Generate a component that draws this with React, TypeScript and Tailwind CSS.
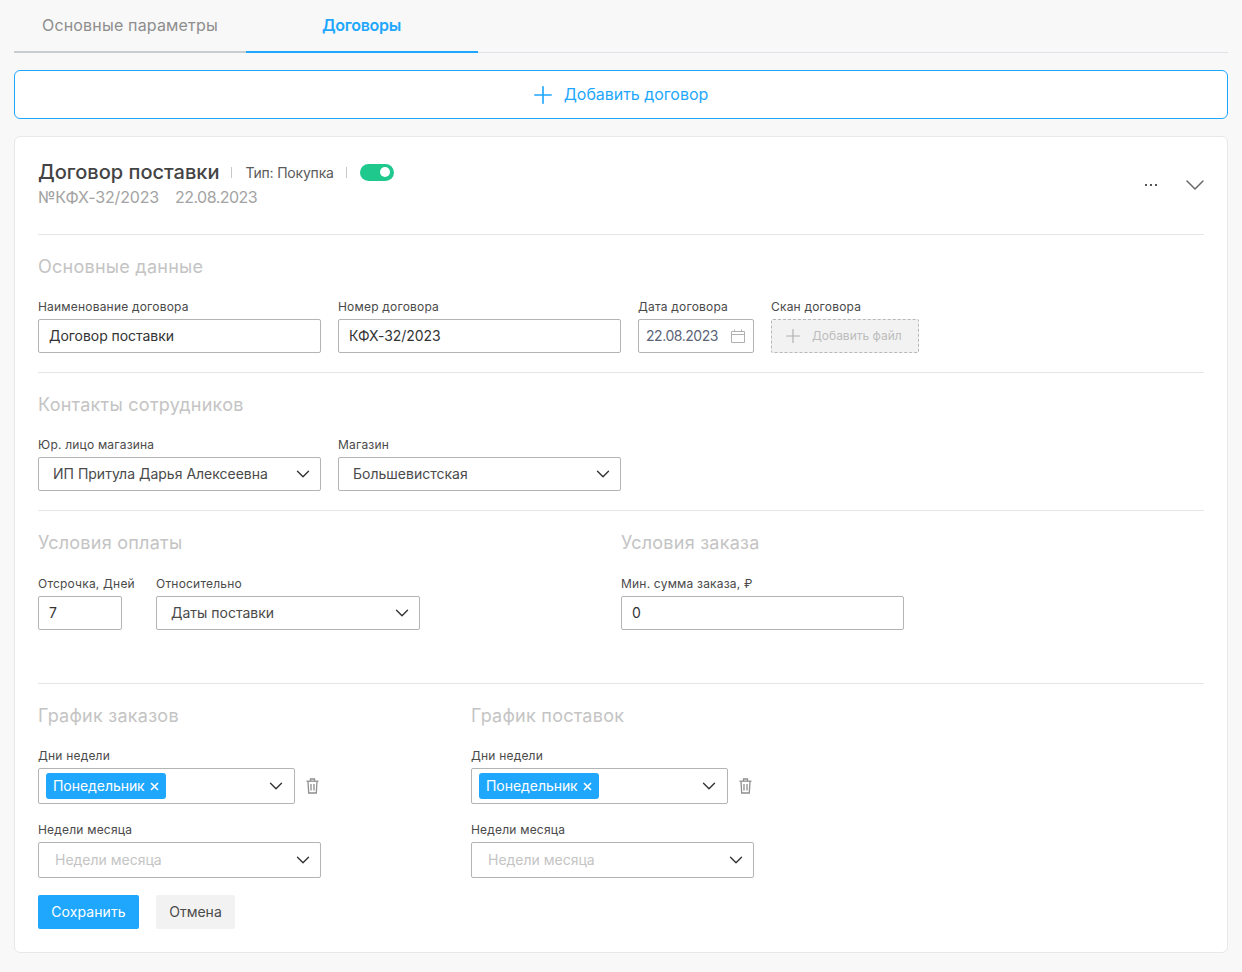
import React from "react";
import { Plus, ChevronDown } from "lucide-react";

const font = { fontFamily: "Inter, 'Noto Sans', sans-serif" };

function Label({ children }: { children: React.ReactNode }) {
  return <div className="h-[13px] text-[12px] leading-[14px] tracking-[0.2px] text-[#4a4a4a] whitespace-nowrap">{children}</div>;
}

function Heading({ children }: { children: React.ReactNode }) {
  return <div className="h-[24px] text-[18px] leading-[24px] tracking-[0.25px] text-[#c4c4c4] whitespace-nowrap">{children}</div>;
}

function Divider() {
  return <div className="h-px bg-[#e6e6e6]" />;
}

function Chevron() {
  return <ChevronDown size={22} strokeWidth={1.5} className="text-[#333333]" />;
}

function Trash() {
  return (
    <svg width="13" height="16" viewBox="0 0 13 16" fill="none" stroke="#8f8f8f" strokeWidth="1.3" className="ml-[11px]">
      <path d="M0.5 3.2H12.5" />
      <path d="M4.5 3V1H8.5V3" />
      <path d="M2 3.5L2.7 15H10.3L11 3.5" />
      <path d="M5 6V12.5M8 6V12.5" />
    </svg>
  );
}

function CalendarIcon() {
  return (
    <svg width="14" height="14" viewBox="0 0 14 14" fill="none" stroke="#b0b0b0" strokeWidth="1">
      <path d="M0.5 2.5H13.5V13.5H0.5Z" />
      <path d="M0.5 5.5H13.5" />
      <path d="M3.5 0.5V2.5M10.5 0.5V2.5" />
    </svg>
  );
}

function TextField({ label, value, width }: { label: string; value: string; width: string }) {
  return (
    <div className={width}>
      <Label>{label}</Label>
      <div className="mt-[6px] flex h-[34px] items-center rounded-[2px] border border-[#b4b4b4] bg-white pb-[2px] pl-[10px] text-[14px] tracking-[-0.05px] text-[#333333]">
        {value}
      </div>
    </div>
  );
}

function SelectField({ label, value, width }: { label: string; value: string; width: string }) {
  return (
    <div className={width}>
      <Label>{label}</Label>
      <div className="mt-[6px] flex h-[34px] items-center justify-between rounded-[2px] border border-[#b4b4b4] bg-white pl-[14px] pr-[6px] text-[14px] text-[#4a4a4a]">
        <span className="whitespace-nowrap pb-[1px]">{value}</span>
        <Chevron />
      </div>
    </div>
  );
}

function ScheduleColumn({ title, className }: { title: string; className: string }) {
  return (
    <div className={className}>
      <Heading>{title}</Heading>
      <div className="mt-[21px]"><Label>Дни недели</Label></div>
      <div className="mt-[6px] flex items-center">
        <div className="flex h-[36px] w-[257px] items-center justify-between rounded-[2px] border border-[#b4b4b4] bg-white pl-[7px] pr-[7px]">
          <div className="flex h-[26px] w-[120px] items-center rounded-[3px] bg-[#1ea7fd] pl-[7px] text-[14px] tracking-[-0.05px] text-white">
            <span className="pb-[1px]">Понедельник</span>
            <svg width="9" height="9" viewBox="0 0 9 9" stroke="#ffffff" strokeWidth="1.6" className="ml-[5px]">
              <path d="M1 1L8 8M8 1L1 8" />
            </svg>
          </div>
          <Chevron />
        </div>
        <Trash />
      </div>
      <div className="mt-[19px]"><Label>Недели месяца</Label></div>
      <div className="mt-[6px] flex h-[36px] w-[283px] items-center justify-between rounded-[2px] border border-[#b4b4b4] bg-white pl-[16px] pr-[6px] text-[14px] text-[#c4c4c4]">
        <span className="pb-[1px]">Недели месяца</span>
        <Chevron />
      </div>
    </div>
  );
}

export default function App() {
  return (
    <div style={font} className="h-[972px] w-[1242px] overflow-hidden bg-[#f8f8f8] px-[14px]">
      <div className="flex h-[53px] border-b border-[#dfe2e6]">
        <div className="h-[53px] w-[232px] border-b-2 border-[#c9ccd1] pl-[28px] pt-[15px] text-[16px] leading-[20px] tracking-[0.17px] text-[#8e8e8e]">
          Основные параметры
        </div>
        <div className="h-[53px] w-[232px] border-b-2 border-[#1ea7fd] pl-[76px] pt-[15px] text-[16px] font-semibold leading-[20px] tracking-[-0.3px] text-[#1ea7fd]">
          Договоры
        </div>
      </div>

      <div className="mt-[17px] flex h-[49px] items-center justify-center gap-[7px] rounded-[6px] border border-[#1ea7fd] bg-white pr-[5px] text-[16px] tracking-[-0.05px] text-[#1ea7fd]">
        <Plus size={28} strokeWidth={1.4} />
        <span className="pb-[2px]">Добавить договор</span>
      </div>

      <div className="mt-[17px] h-[817px] rounded-[6px] border border-[#e8e8e8] bg-white px-[23px]">
        <div className="flex h-[97px] justify-between pt-[23px]">
          <div>
            <div className="flex h-[24px] items-center">
              <span className="text-[20px] font-medium leading-[24px] text-[#444444]">Договор поставки</span>
              <span className="ml-[12px] h-[11px] w-px bg-[#c8c8c8]" />
              <span className="ml-[13px] text-[14px] tracking-[-0.2px] text-[#5a5a5a]">Тип: Покупка</span>
              <span className="ml-[12px] h-[11px] w-px bg-[#c8c8c8]" />
              <span className="ml-[13px] flex h-[17px] w-[34px] items-center justify-end rounded-full bg-[#1fc98e] pr-[4px]">
                <span className="h-[10px] w-[10px] rounded-full bg-white" />
              </span>
            </div>
            <div className="mt-[1px] flex h-[24px] items-center gap-[16px] text-[16px] text-[#a3a3a3]">
              <span className="tracking-[-0.15px]">№КФХ-32/2023</span>
              <span className="tracking-[-0.55px]">22.08.2023</span>
            </div>
          </div>
          <div className="flex h-[50px] items-center pb-[2px] pt-[2px]">
            <div className="flex gap-[3px]">
              <span className="h-[2px] w-[2px] bg-[#555555]" />
              <span className="h-[2px] w-[2px] bg-[#555555]" />
              <span className="h-[2px] w-[2px] bg-[#555555]" />
            </div>
            <ChevronDown size={32} strokeWidth={1.1} className="ml-[22px] -mr-[7px] text-[#666666]" />
          </div>
        </div>
        <Divider />

        <div className="h-[137px] pt-[20px]">
          <Heading>Основные данные</Heading>
          <div className="mt-[21px] flex gap-[17px]">
            <TextField label="Наименование договора" value="Договор поставки" width="w-[283px]" />
            <TextField label="Номер договора" value="КФХ-32/2023" width="w-[283px]" />
            <div className="w-[116px]">
              <Label>Дата договора</Label>
              <div className="mt-[6px] flex h-[34px] items-center justify-between rounded-[2px] border border-[#b4b4b4] bg-white pl-[7px] pr-[8px] text-[14px] tracking-[-0.45px] text-[#5b6478]">
                <span className="pb-[1px]">22.08.2023</span>
                <CalendarIcon />
              </div>
            </div>
            <div className="w-[148px]">
              <Label>Скан договора</Label>
              <div className="mt-[6px] flex h-[34px] items-center rounded-[2px] border border-dashed border-[#b8b8b8] bg-[#f2f2f2] pl-[10px] text-[12px] text-[#bdbdbd]">
                <Plus size={22} strokeWidth={1.3} className="text-[#b0b0b0]" />
                <span className="ml-[8px] whitespace-nowrap">Добавить файл</span>
              </div>
            </div>
          </div>
        </div>
        <Divider />

        <div className="h-[137px] pt-[20px]">
          <Heading>Контакты сотрудников</Heading>
          <div className="mt-[21px] flex gap-[17px]">
            <SelectField label="Юр. лицо магазина" value="ИП Притула Дарья Алексеевна" width="w-[283px]" />
            <SelectField label="Магазин" value="Большевистская" width="w-[283px]" />
          </div>
        </div>
        <Divider />

        <div className="flex h-[172px] pt-[20px]">
          <div className="w-[583px]">
            <Heading>Условия оплаты</Heading>
            <div className="mt-[22px] flex gap-[34px]">
              <TextField label="Отсрочка, Дней" value="7" width="w-[84px]" />
              <SelectField label="Относительно" value="Даты поставки" width="w-[264px]" />
            </div>
          </div>
          <div>
            <Heading>Условия заказа</Heading>
            <div className="mt-[22px]">
              <TextField label="Мин. сумма заказа, ₽" value="0" width="w-[283px]" />
            </div>
          </div>
        </div>
        <Divider />

        <div className="flex pt-[20px]">
          <ScheduleColumn title="График заказов" className="w-[433px]" />
          <ScheduleColumn title="График поставок" className="w-[283px]" />
        </div>

        <div className="mt-[17px] flex gap-[17px] text-[14px]">
          <div className="flex h-[34px] w-[101px] items-center justify-center rounded-[2px] bg-[#1ea7fd] pb-[1px] tracking-[0.1px] text-white">Сохранить</div>
          <div className="flex h-[34px] w-[79px] items-center justify-center rounded-[2px] bg-[#f2f2f2] pb-[1px] text-[#4a4a4a]">Отмена</div>
        </div>
      </div>
    </div>
  );
}
